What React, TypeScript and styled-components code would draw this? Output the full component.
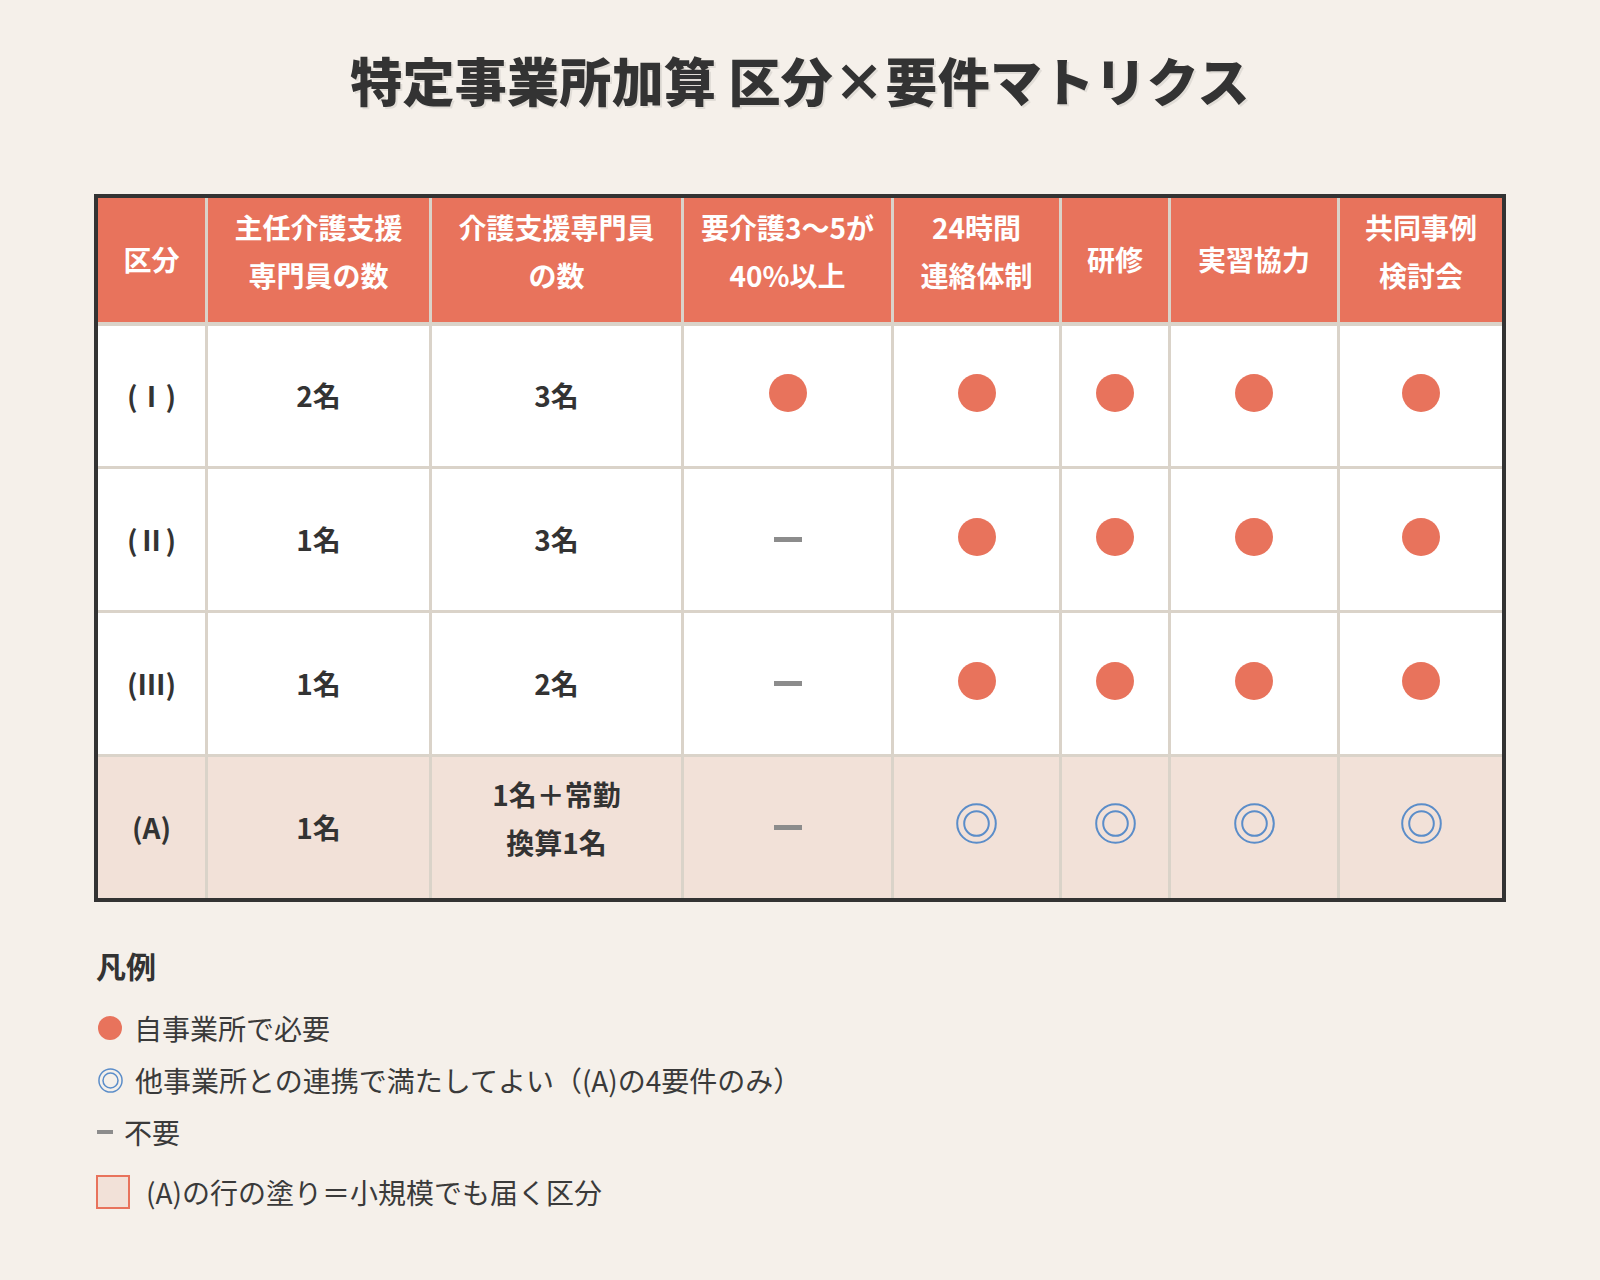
import React from "react";
import styled, { createGlobalStyle } from "styled-components";

const GlobalStyle = createGlobalStyle`
  html, body {
    margin: 0;
    padding: 0;
    background: #f5f0ea;
  }
  body {
    font-family: "Noto Sans CJK JP", "Noto Sans", sans-serif;
    color: #333333;
  }
`;

const Page = styled.div`
  width: 1412px;
  margin: 0 auto;
  padding: 44px 0 60px;
  box-sizing: content-box;
`;

const Title = styled.h1`
  margin: 0 0 78px;
  font-size: 52px;
  line-height: 72px;
  font-weight: 900;
  text-align: center;
  color: #333333;
  letter-spacing: 0.3px;
  text-shadow: 2px 2px 0 rgba(0, 0, 0, 0.08);
`;

const Matrix = styled.div`
  display: grid;
  grid-template-columns: 107px 221px 249px 207px 165px 106px 166px 162px;
  grid-template-rows: 125px 140px 141px 141px 141px;
  gap: 3px;
  background: #dad3c9;
  border: 4px solid #333333;
`;

const Row = styled.div`
  display: contents;
`;

const HeadCell = styled.div<{ $multi?: boolean }>`
  display: flex;
  align-items: center;
  justify-content: center;
  text-align: center;
  box-sizing: border-box;
  padding-bottom: ${(p) => (p.$multi ? 16 : 0)}px;
  background: #e8735c;
  border-bottom: 1px solid #dad3c9;
  color: #ffffff;
  font-size: 28px;
  font-weight: 700;
  line-height: 1.7;
`;

const Cell = styled.div<{ $shade?: boolean; $multi?: boolean }>`
  display: flex;
  align-items: center;
  justify-content: center;
  text-align: center;
  box-sizing: border-box;
  padding-bottom: ${(p) => (p.$multi ? 18 : 0)}px;
  background: ${(p) => (p.$shade ? "#f2e1d8" : "#ffffff")};
  color: #333333;
  font-size: 28px;
  font-weight: 700;
  line-height: 1.7;
`;

const Dot = styled.span<{ $size?: number }>`
  display: inline-block;
  width: ${(p) => p.$size ?? 38}px;
  height: ${(p) => p.$size ?? 38}px;
  border-radius: 50%;
  background: #e8735c;
  margin-bottom: ${(p) => (p.$size ? 0 : 6)}px;
`;

const Dash = styled.span<{ $w?: number; $h?: number }>`
  display: inline-block;
  width: ${(p) => p.$w ?? 28}px;
  height: ${(p) => p.$h ?? 5}px;
  background: #8c8c8c;
`;

const RingSvg = styled.svg<{ $lift?: number }>`
  display: block;
  margin-bottom: ${(p) => p.$lift ?? 0}px;
`;

const DoubleCircle = ({ size = 41, lift = 8 }: { size?: number; lift?: number }) => {
  const c = size / 2;
  const sw = size > 30 ? 2 : 1.5;
  return (
    <RingSvg $lift={lift} width={size} height={size} viewBox={`0 0 ${size} ${size}`}>
      <circle cx={c} cy={c} r={c - sw / 2 - 0.2} fill="none" stroke="#5b8dc9" strokeWidth={sw} />
      <circle cx={c} cy={c} r={size * 0.3} fill="none" stroke="#5b8dc9" strokeWidth={sw} />
    </RingSvg>
  );
};

const Legend = styled.section`
  margin-top: 41px;
  padding-left: 2px;
`;

const LegendTitle = styled.h2`
  margin: 0 0 14px;
  font-size: 30px;
  line-height: 45px;
  font-weight: 700;
  color: #333333;
`;

const LegendItem = styled.div<{ $gap: number; $indent?: number; $top?: number }>`
  display: flex;
  align-items: center;
  gap: ${(p) => p.$gap}px;
  height: 52px;
  padding-left: ${(p) => p.$indent ?? 0}px;
  margin-top: ${(p) => p.$top ?? 0}px;
  font-size: 28px;
  font-weight: 400;
  color: #3a3a3a;
`;

const Swatch = styled.span`
  display: inline-block;
  width: 34px;
  height: 34px;
  box-sizing: border-box;
  background: #f2e1d8;
  border: 2px solid #e8735c;
`;

type Mark = "dot" | "ring" | "dash";

const renderMark = (m: Mark) => {
  if (m === "dot") return <Dot />;
  if (m === "ring") return <DoubleCircle />;
  return <Dash />;
};

type Head = { text: React.ReactNode; multi?: boolean };

const headers: Head[] = [
  { text: "区分" },
  { text: <>主任介護支援<br />専門員の数</>, multi: true },
  { text: <>介護支援専門員<br />の数</>, multi: true },
  { text: <>要介護3〜5が<br />40%以上</>, multi: true },
  { text: <>24時間<br />連絡体制</>, multi: true },
  { text: "研修" },
  { text: "実習協力" },
  { text: <>共同事例<br />検討会</>, multi: true },
];

type RowData = {
  label: string;
  chief: React.ReactNode;
  staff: React.ReactNode;
  staffMulti?: boolean;
  marks: Mark[];
  shade?: boolean;
};

const rows: RowData[] = [
  { label: "(Ⅰ)", chief: "2名", staff: "3名", marks: ["dot", "dot", "dot", "dot", "dot"] },
  { label: "(Ⅱ)", chief: "1名", staff: "3名", marks: ["dash", "dot", "dot", "dot", "dot"] },
  { label: "(Ⅲ)", chief: "1名", staff: "2名", marks: ["dash", "dot", "dot", "dot", "dot"] },
  {
    label: "(A)",
    chief: "1名",
    staff: <>1名＋常勤<br />換算1名</>,
    staffMulti: true,
    marks: ["dash", "ring", "ring", "ring", "ring"],
    shade: true,
  },
];

export default function App() {
  return (
    <>
      <GlobalStyle />
      <Page>
        <Title>特定事業所加算 区分×要件マトリクス</Title>
        <Matrix>
          <Row>
            {headers.map((h, i) => (
              <HeadCell key={i} $multi={h.multi}>
                {h.text}
              </HeadCell>
            ))}
          </Row>
          {rows.map((r) => (
            <Row key={r.label}>
              <Cell $shade={r.shade}>{r.label}</Cell>
              <Cell $shade={r.shade}>{r.chief}</Cell>
              <Cell $shade={r.shade} $multi={r.staffMulti}>
                {r.staff}
              </Cell>
              {r.marks.map((m, i) => (
                <Cell key={i} $shade={r.shade}>
                  {renderMark(m)}
                </Cell>
              ))}
            </Row>
          ))}
        </Matrix>
        <Legend>
          <LegendTitle>凡例</LegendTitle>
          <LegendItem $gap={12} $indent={2}>
            <Dot $size={24} />
            <span>自事業所で必要</span>
          </LegendItem>
          <LegendItem $gap={12} $indent={2}>
            <DoubleCircle size={25} lift={0} />
            <span>他事業所との連携で満たしてよい（(A)の4要件のみ）</span>
          </LegendItem>
          <LegendItem $gap={11} $indent={1}>
            <Dash $w={16} $h={4} />
            <span>不要</span>
          </LegendItem>
          <LegendItem $gap={16} $top={8}>
            <Swatch />
            <span>(A)の行の塗り＝小規模でも届く区分</span>
          </LegendItem>
        </Legend>
      </Page>
    </>
  );
}
